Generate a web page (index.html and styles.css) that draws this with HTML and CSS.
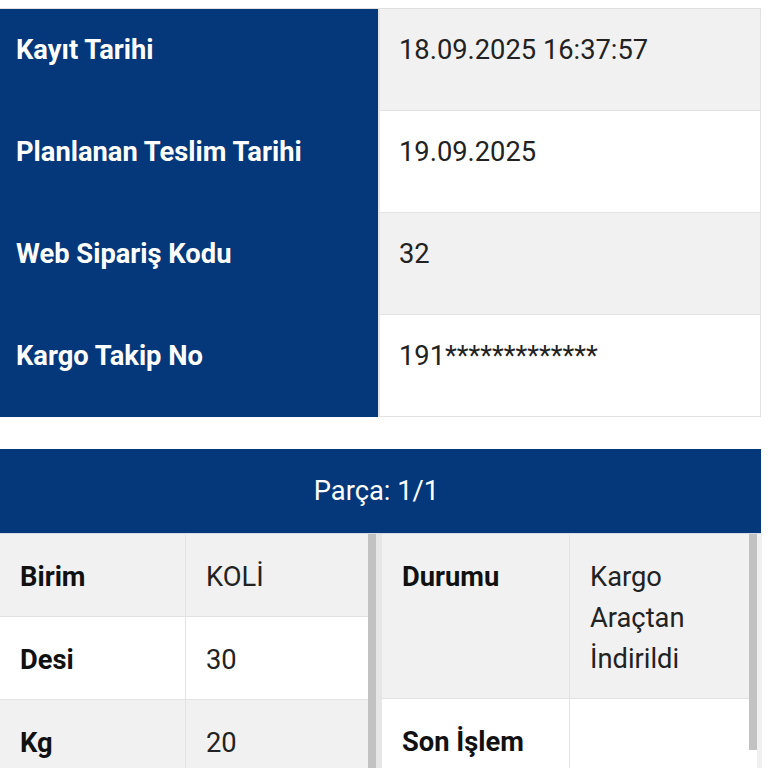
FILE: index.html
```html
<!DOCTYPE html>
<html lang="tr">
<head>
<meta charset="utf-8">
<title>Kargo Takip</title>
<link rel="stylesheet" href="styles.css">
</head>
<body>
<div class="page">
  <div class="info">
    <div class="info-row first">
      <div class="info-label">Kayıt Tarihi</div>
      <div class="info-value odd">18.09.2025 16:37:57</div>
    </div>
    <div class="info-row">
      <div class="info-label">Planlanan Teslim Tarihi</div>
      <div class="info-value">19.09.2025</div>
    </div>
    <div class="info-row">
      <div class="info-label">Web Sipariş Kodu</div>
      <div class="info-value odd">32</div>
    </div>
    <div class="info-row">
      <div class="info-label">Kargo Takip No</div>
      <div class="info-value">191*************</div>
    </div>
  </div>

  <section class="parca">
    <div class="parca-head">Parça: 1/1</div>
    <div class="panes">
      <div class="pane pane-left">
        <div class="grid grid-left">
          <div class="row odd"><div class="k">Birim</div><div class="v">KOLİ</div></div>
          <div class="row"><div class="k">Desi</div><div class="v">30</div></div>
          <div class="row odd"><div class="k">Kg</div><div class="v">20</div></div>
        </div>
        <div class="bar"><div class="thumb thumb-full"></div></div>
      </div>
      <div class="pane pane-right">
        <div class="grid grid-right">
          <div class="row odd"><div class="k">Durumu</div><div class="v">Kargo Araçtan İndirildi</div></div>
          <div class="row"><div class="k">Son İşlem</div><div class="v"></div></div>
        </div>
        <div class="bar bar-right"><div class="thumb thumb-part"></div></div>
      </div>
    </div>
  </section>
</div>
</body>
</html>
```

FILE: styles.css
```css
html, body {
  margin: 0;
  padding: 0;
  overflow: hidden;
  background: #ffffff;
}

body {
  font-family: Roboto, "Liberation Sans", sans-serif;
  font-size: 27.3px;
  color: #222222;
}

.page {
  width: 761px;
  padding-top: 8px;
}

.info {
  display: flex;
  flex-direction: column;
}

.info-row {
  display: grid;
  grid-template-columns: 378px 1fr;
  height: 102px;
}

.info-row.first {
  border-top: 1px solid #e0e0e0;
}

.info-label {
  background: #04387a;
  color: #ffffff;
  font-weight: 700;
  line-height: 41px;
  padding: 21px 16px 0;
}

.info-value {
  background: #ffffff;
  line-height: 41px;
  padding: 21px 19px 0;
  border-left: 2px solid #e6e6e6;
  border-right: 1px solid #e2e2e2;
  border-bottom: 1px solid #e2e2e2;
}

.info-value.odd {
  background: #f1f1f1;
}

.parca {
  margin-top: 32px;
}

.parca-head {
  height: 84px;
  background: #04387a;
  color: #ffffff;
  display: flex;
  align-items: center;
  justify-content: center;
  padding-right: 8px;
  border-bottom: 1px solid #d5dde8;
}

.panes {
  display: flex;
  width: 762px;
}

.pane {
  display: flex;
}

.pane-left {
  width: 382px;
}

.pane-right {
  width: 380px;
}

.grid {
  display: flex;
  flex-direction: column;
}

.grid-left {
  width: 368px;
}

.grid-right {
  width: 367px;
}

.row {
  display: grid;
  background: #ffffff;
  border-bottom: 1px solid #e2e2e2;
}

.grid-left .row {
  grid-template-columns: 186px 1fr;
}

.grid-right .row {
  grid-template-columns: 188px 1fr;
}

.row.odd {
  background: #f1f1f1;
}

.k,
.v {
  line-height: 41px;
  padding: 23px 20px 18px;
}

.k {
  font-weight: 700;
  color: #111111;
  border-right: 1px solid #e4e4e4;
}

.v {
  color: #222222;
}

.bar {
  flex: 1;
  display: flex;
  background: linear-gradient(to right, transparent 8px, #e6e6e6 8px);
}

.bar-right {
  background: linear-gradient(to right, transparent 8px, #f0f0f0 8px);
}

.thumb {
  width: 8px;
  background: #c2c2c2;
}

.thumb-full {
  align-self: stretch;
}

.thumb-part {
  height: 216px;
}
```
